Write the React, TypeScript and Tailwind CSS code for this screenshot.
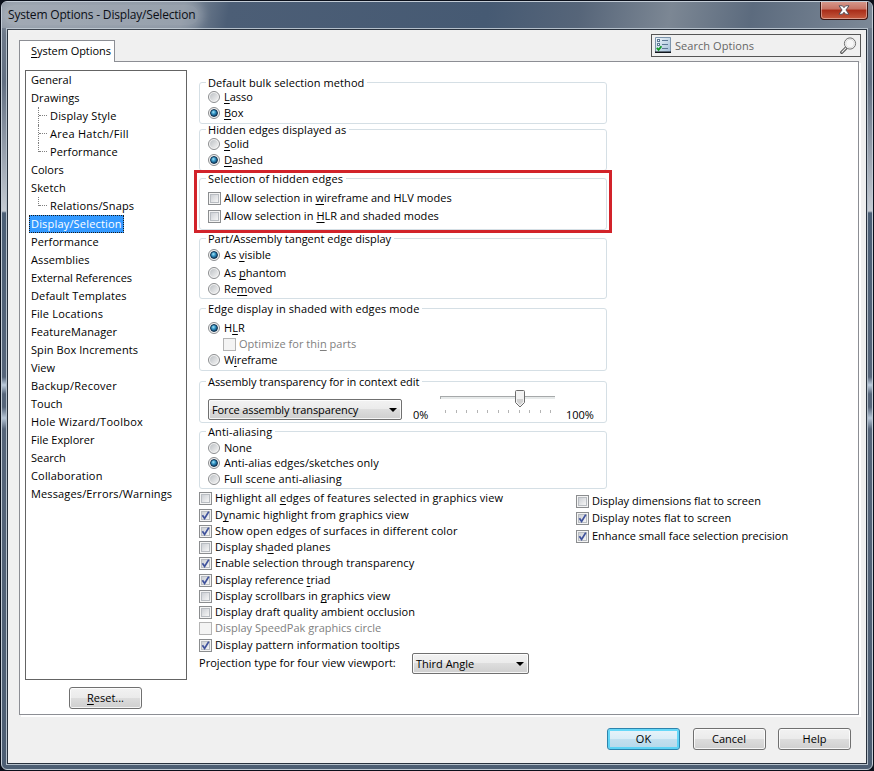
import { Fragment, type ReactNode } from "react";
import clsx from "clsx";

interface TreeEntry {
  label: string;
  child?: boolean;
  last?: boolean;
  tracking?: string;
}

const entries: TreeEntry[] = [
  { label: "General" },
  { label: "Drawings", tracking: "tracking-[0.1px]" },
  { label: "Display Style", child: true, tracking: "tracking-[0.16px]" },
  { label: "Area Hatch/Fill", child: true, tracking: "tracking-[0.27px]" },
  { label: "Performance", child: true, last: true, tracking: "tracking-[0.1px]" },
  { label: "Colors" },
  { label: "Sketch", tracking: "tracking-[0.15px]" },
  { label: "Relations/Snaps", child: true, last: true, tracking: "tracking-[0.14px]" },
  { label: "Display/Selection", tracking: "tracking-[0.18px]" },
  { label: "Performance", tracking: "tracking-[0.1px]" },
  { label: "Assemblies", tracking: "tracking-[0.12px]" },
  { label: "External References", tracking: "tracking-[-0.05px]" },
  { label: "Default Templates", tracking: "tracking-[0.12px]" },
  { label: "File Locations", tracking: "tracking-[0.2px]" },
  { label: "FeatureManager", tracking: "tracking-[0.1px]" },
  { label: "Spin Box Increments", tracking: "tracking-[0.08px]" },
  { label: "View" },
  { label: "Backup/Recover", tracking: "tracking-[0.22px]" },
  { label: "Touch" },
  { label: "Hole Wizard/Toolbox", tracking: "tracking-[0.26px]" },
  { label: "File Explorer" },
  { label: "Search" },
  { label: "Collaboration", tracking: "tracking-[0.18px]" },
  { label: "Messages/Errors/Warnings", tracking: "tracking-[0.14px]" },
];

// "&" marks the access key, as in a Windows resource string
function Mnemonic({ text }: { text: string }) {
  const at = text.indexOf("&");
  if (at < 0) return <>{text}</>;
  return (
    <>
      {text.slice(0, at)}
      <span className="underline decoration-1 underline-offset-2 [text-decoration-skip-ink:none]">{text[at + 1]}</span>
      {text.slice(at + 2)}
    </>
  );
}

interface OptionProps {
  label: string;
  checked?: boolean;
  disabled?: boolean;
  className?: string;
}

function Radio({ label, checked, className }: OptionProps) {
  return (
    <div className={clsx("flex h-4 items-center gap-[4px]", className)}>
      <span className="flex size-3 shrink-0 items-center justify-center rounded-full border border-[#8b8d8f] bg-[#f4f4f4]">
        {checked ? (
          <span className="size-2 rounded-full border border-[#0d2f4d] bg-[radial-gradient(circle_at_40%_35%,#a5e4f8_0,#2f8fc0_40%,#0d3a60_85%)]" />
        ) : (
          <span className="size-2 rounded-full bg-linear-135 from-[#bdc1c5] to-[#f3f3f3]" />
        )}
      </span>
      <span>
        <Mnemonic text={label} />
      </span>
    </div>
  );
}

function Checkbox({ label, checked, disabled, className }: OptionProps) {
  return (
    <div className={clsx("flex h-4 items-center gap-[3px]", disabled && "text-[#7f7f7f]", className)}>
      <span
        className={clsx(
          "flex size-[13px] shrink-0 items-center justify-center border bg-[#f4f4f4]",
          disabled ? "border-[#b4b4b4]" : "border-[#8b8d8f]"
        )}
      >
        {!disabled && (
          <span className="size-[9px] border border-[#b9bdc2] bg-linear-135 from-[#cdd0d5] to-[#f6f6f6]">
            {checked && (
              <svg viewBox="0 0 9 9" className="-mt-px -ml-px block size-[9px] overflow-visible">
                <path d="M1.4 4.2 L3.6 7.4 L7.8 0.6" fill="none" stroke="#40539c" strokeWidth="1.8" />
              </svg>
            )}
          </span>
        )}
      </span>
      <span>
        <Mnemonic text={label} />
      </span>
    </div>
  );
}

interface GroupProps {
  title: string;
  className: string;
  tracking?: string;
  children: ReactNode;
}

function Group({ title, className, tracking, children }: GroupProps) {
  return (
    <div className={clsx("relative w-[408px] rounded-[3px] border border-[#d5dfe5] pl-2", className)}>
      <span className={clsx("absolute -top-[6px] left-[6px] bg-white pr-[3px] pl-[2px] leading-3", tracking)}>
        {title}
      </span>
      {children}
    </div>
  );
}

function Select({ value, className }: { value: string; className: string }) {
  return (
    <div
      className={clsx(
        "flex items-center justify-between rounded-[2px] border border-[#707070] bg-[linear-gradient(#f2f2f2_0,#ebebeb_48%,#dddddd_50%,#cfcfcf_100%)] pr-[4px] pl-[3px] inset-ring inset-ring-white/80",
        className
      )}
    >
      <span>{value}</span>
      <svg viewBox="0 0 8 4" className="h-1 w-2">
        <path d="M0 0H8L4 4Z" />
      </svg>
    </div>
  );
}

function PushButton({ label, primary }: { label: string; primary?: boolean }) {
  return (
    <button
      className={clsx(
        "h-[22px] w-[73px] rounded-[3px] border pb-[2px] leading-none",
        primary
          ? "border-[#2c84ad] bg-[linear-gradient(#e9f4fa_0,#d9edf7_48%,#c2e0ef_50%,#b5d8ea_100%)] inset-ring-2 inset-ring-[#46d1f8]/80"
          : "border-[#707070] bg-[linear-gradient(#f2f2f2_0,#ebebeb_48%,#dddddd_50%,#cfcfcf_100%)] inset-ring inset-ring-white/80"
      )}
    >
      <Mnemonic text={label} />
    </button>
  );
}

function TransparencySlider() {
  return (
    <svg viewBox="0 0 116 26" className="h-[26px] w-[116px]">
      <rect x="0" y="6" width="115" height="3" fill="#e7eaea" />
      <rect x="0" y="6" width="115" height="1" fill="#a6a9aa" />
      <rect x="0" y="6" width="1" height="3" fill="#a6a9aa" />
      {Array.from({ length: 11 }, (_, i) => (
        <rect key={i} x={Math.round(5 + i * 10.5)} y="20" width="1" height="3" fill="#b4b4b4" />
      ))}
      <path
        d="M76.5 .5H83.5Q84.5 .5 84.5 1.5V12.5L80 17L75.5 12.5V1.5Q75.5 .5 76.5 .5Z"
        fill="#f2f2f2"
        stroke="#6c6c6c"
      />
      <path d="M77 9H83V12L80 15L77 12Z" fill="#d2d2d2" />
    </svg>
  );
}

function TitleBar() {
  return (
    <div className="flex h-[26px] items-start justify-between bg-[linear-gradient(100deg,#8b95a2_0,#7d8998_180px,#4c5e76_225px,#465a73_480px,#566579_570px,#7c8794_660px,#5c6b7e_740px,#7f8b99_872px)]">
      <div className="mt-[3px] ml-[2px] rounded-full bg-white/20 pr-1 pl-[4px] font-['Open_Sans','Noto_Sans',sans-serif] text-[12px] leading-5 tracking-[-0.18px] text-[#0b0f16] shadow-[0_0_8px_5px_rgba(255,255,255,0.2)]">
        System Options - Display/Selection
      </div>
      <div className="-mt-px mr-1 flex h-[19px] w-[48px] items-center justify-center rounded-b-[4px] border border-t-0 border-[#3c1512] bg-[linear-gradient(#d79b8f_0,#c67263_45%,#a92c18_50%,#c45b40_100%)] inset-ring inset-ring-white/40">
        <svg viewBox="0 0 12 10" className="h-[10px] w-3">
          <path
            d="M1 .8H4.4L6 2.7L7.6.8H11L7.9 5L11 9.2H7.6L6 7.2L4.4 9.2H1L4.1 5Z"
            fill="#fff"
            stroke="#4a4a55"
            strokeWidth="0.9"
          />
        </svg>
      </div>
    </div>
  );
}

function SearchBox() {
  return (
    <div className="flex h-[23px] w-[210px] items-center border border-[#555] px-[3px]">
      <svg viewBox="0 0 16 16" className="-mt-px size-4">
        <defs>
          <linearGradient id="sheet" x1="0" y1="0" x2="1" y2="1">
            <stop offset="0" stopColor="#f3f8fc" />
            <stop offset="1" stopColor="#9dbbd6" />
          </linearGradient>
        </defs>
        <rect width="16" height="16" fill="url(#sheet)" />
        <path d="M.5 15V.5H15.5V15" fill="none" stroke="#7d95ac" />
        <path d="M0 15.3H16" stroke="#10151c" strokeWidth="1.4" />
        <rect x="2.5" y="2.5" width="2" height="2" fill="#fff" stroke="#5c7894" />
        <rect x="2.5" y="6.5" width="2" height="2" fill="#fff" stroke="#5c7894" />
        <path d="M7 3.5H13M7 7.5H13M7 11.5H13" stroke="#5c7894" />
        <path d="M1.8 10.8L3.6 12.8L6.4 9.2" fill="none" stroke="#109a26" strokeWidth="1.8" />
      </svg>
      <span className="ml-1 grow tracking-[0.05px] text-[#666]">Search Options</span>
      <svg viewBox="0 0 17 17" className="size-[17px]">
        <path d="M6.2 10.8L1.7 15.3" stroke="#555" strokeWidth="3.2" strokeLinecap="round" />
        <path d="M5.8 11.2L1.9 15.1" stroke="#eee" strokeWidth="1.2" strokeLinecap="round" />
        <circle cx="10" cy="6.5" r="5.6" fill="#f7f7f7" stroke="#707070" />
        <circle cx="10" cy="6.5" r="4.2" fill="none" stroke="#dcdcdc" />
      </svg>
    </div>
  );
}

function OptionsTree() {
  return (
    <div className="h-[610px] w-[162px] border border-[#646464] bg-white">
      {entries.map((entry, i) => (
        <Fragment key={i}>
          {entry.child ? (
            <div className="flex h-[18px] pl-[12px]">
              <span className={clsx("border-l border-dotted border-[#808080]", entry.last ? "h-[9px]" : "h-[18px]")} />
              <span className="mr-[3px] h-[9px] w-2 border-b border-dotted border-[#808080]" />
              <span className={clsx("leading-[18px]", entry.tracking)}>{entry.label}</span>
            </div>
          ) : (
            <div className="flex h-[18px] pl-[3px]">
              <span
                className={clsx(
                  "h-[18px]",
                  entry.tracking,
                  entry.label === "Display/Selection"
                    ? "w-[95px] border border-dotted border-[#1a1a1a] bg-[#3399ff] pl-px leading-4 text-white"
                    : "px-[2px] leading-[18px]"
                )}
              >
                {entry.label}
              </span>
            </div>
          )}
        </Fragment>
      ))}
    </div>
  );
}

function DisplayOptions() {
  return (
    <div className="relative ml-3 w-[600px] pt-[12px]">
      <Group title="Default bulk selection method" tracking="tracking-[0.08px]" className="h-[42px] pt-[6px]">
        <Radio label="&Lasso" />
        <Radio label="&Box" checked />
      </Group>
      <Group title="Hidden edges displayed as" tracking="tracking-[0.08px]" className="mt-[5px] h-[42px] pt-[6px]">
        <Radio label="&Solid" />
        <Radio label="&Dashed" checked />
      </Group>
      <Group title="Selection of hidden edges" tracking="tracking-[0.14px]" className="mt-[7px] h-[52px] pt-[11px]">
        <Checkbox label="Allow selection in &wireframe and HLV modes" />
        <Checkbox label="Allow selection in &HLR and shaded modes" className="mt-[2px] tracking-[0.05px]" />
      </Group>
      <Group title="Part/Assembly tangent edge display" className="mt-[8px] h-[61px] pt-[8px]">
        <Radio label="As &visible" checked />
        <Radio label="As &phantom" className="mt-[2px]" />
        <Radio label="Re&moved" />
      </Group>
      <Group
        title="Edge display in shaded with edges mode"
        tracking="tracking-[0.11px]"
        className="mt-[9px] h-[63px] pt-[11px]"
      >
        <Radio label="H&LR" checked />
        <Checkbox label="Optimize for thi&n parts" disabled className="ml-[15px] tracking-[0.04px]" />
        <Radio label="W&ireframe" className="-tracking-[0.1px]" />
      </Group>
      <Group
        title="Assembly transparency for in context edit"
        tracking="tracking-[-0.04px]"
        className="mt-[10px] flex h-[42px]"
      >
        <Select value="Force assembly transparency" className="mt-[17px] h-[21px] w-[194px] tracking-[-0.12px]" />
        <span className="mt-[25px] ml-[11px] w-[27px] leading-4">0%</span>
        <div className="mt-[8px]">
          <TransparencySlider />
        </div>
        <span className="mt-[25px] ml-[10px] leading-4">100%</span>
      </Group>
      <Group title="Anti-aliasing" tracking="tracking-[0.14px]" className="mt-[8px] h-[58px] pt-[8px]">
        <Radio label="None" />
        <Radio label="Anti-alias edges/sketches only" checked className="-mt-px tracking-[0.05px]" />
        <Radio label="Full scene anti-aliasing" className="tracking-[0.12px]" />
      </Group>
      <div className="flex">
        <div className="w-[377px] pt-px">
          <Checkbox
            label="Highlight all &edges of features selected in graphics view"
            className="tracking-[0.11px]"
          />
          <Checkbox label="D&ynamic highlight from graphics view" checked className="mt-px tracking-[0.06px]" />
          <Checkbox
            label="Show open edges of surfaces in different color"
            checked
            className="tracking-[0.11px]"
          />
          <Checkbox label="Display sh&aded planes" className="tracking-[0.05px]" />
          <Checkbox label="Enable selection through transparency" checked className="tracking-[0.04px]" />
          <Checkbox label="Display reference &triad" checked className="mt-px tracking-[-0.04px]" />
          <Checkbox label="Display scrollbars in &graphics view" className="tracking-[0.03px]" />
          <Checkbox label="Display draft quality ambient occlusion" className="tracking-[0.03px]" />
          <Checkbox label="Display SpeedPak graphics circle" disabled />
          <Checkbox
            label="Display pattern information tooltips"
            checked
            className="mt-px tracking-[0.05px]"
          />
          <div className="flex">
            <span className="mt-[2px] w-[213px] leading-4 tracking-[0.03px]">
              Projection type for four view viewport:
            </span>
            <Select value="Third Angle" className="h-[21px] w-[117px]" />
          </div>
        </div>
        <div className="pt-[4px]">
          <Checkbox label="Display dimensions flat to screen" />
          <Checkbox label="Display notes flat to screen" checked className="mt-px tracking-[0.03px]" />
          <Checkbox label="Enhance small face selection precision" checked className="mt-[2px]" />
        </div>
      </div>
      {/* Callout round the hidden edges group */}
      <div className="absolute top-[100px] -left-[5px] h-[63px] w-[418px] border-3 border-[#d2232a]" />
    </div>
  );
}

export default function App() {
  return (
    <div className="h-[771px] w-[874px] overflow-hidden bg-[#0b101b] p-px font-['Open_Sans','Noto_Sans',sans-serif] text-[11px] leading-4 whitespace-nowrap text-black">
      <div className="h-[769px] overflow-hidden rounded-[6px] border border-[#c3ccd6] bg-[linear-gradient(#75808f_0,#626f82_80px,#c4cad2_209px,#4c5f76_211px,#56657a_375px,#bccbdc_383px,#56657a_392px,#56657a_405px,#b6c5d6_416px,#56657a_427px,#4d5e73_100%)]">
        <TitleBar />
        <div className="mx-1 h-[737px] border border-[#b4bfca]">
          <div className="h-[735px] border border-[#28313d] bg-[#f0f0f0]">
            <div className="flex h-[31px] items-end justify-between pr-[5px] pl-[11px]">
              <div className="z-10 -mb-px flex h-[22px] w-[96px] items-center border border-b-0 border-[#8c8e94] bg-white pb-px pl-[11px] tracking-[-0.04px]">
                <span>
                  <Mnemonic text="&System Options" />
                </span>
              </div>
              <div className="self-start pt-[4px]">
                <SearchBox />
              </div>
            </div>
            <div className="ml-[11px] flex h-[654px] w-[840px] border border-[#8c8e94] bg-white shadow-[2px_2px_0_#fff]">
              <div className="ml-[5px] pt-[8px]">
                <OptionsTree />
                <div className="mt-[7px] pl-[44px]">
                  <PushButton label="&Reset..." />
                </div>
              </div>
              <div className="-mt-px pt-[9px]">
                <DisplayOptions />
              </div>
            </div>
            <div className="flex justify-end pt-[13px] pr-[15px]">
              <div className="flex gap-[12.5px]">
                <PushButton label="OK" primary />
                <PushButton label="Cancel" />
                <PushButton label="Help" />
              </div>
            </div>
          </div>
        </div>
      </div>
    </div>
  );
}
